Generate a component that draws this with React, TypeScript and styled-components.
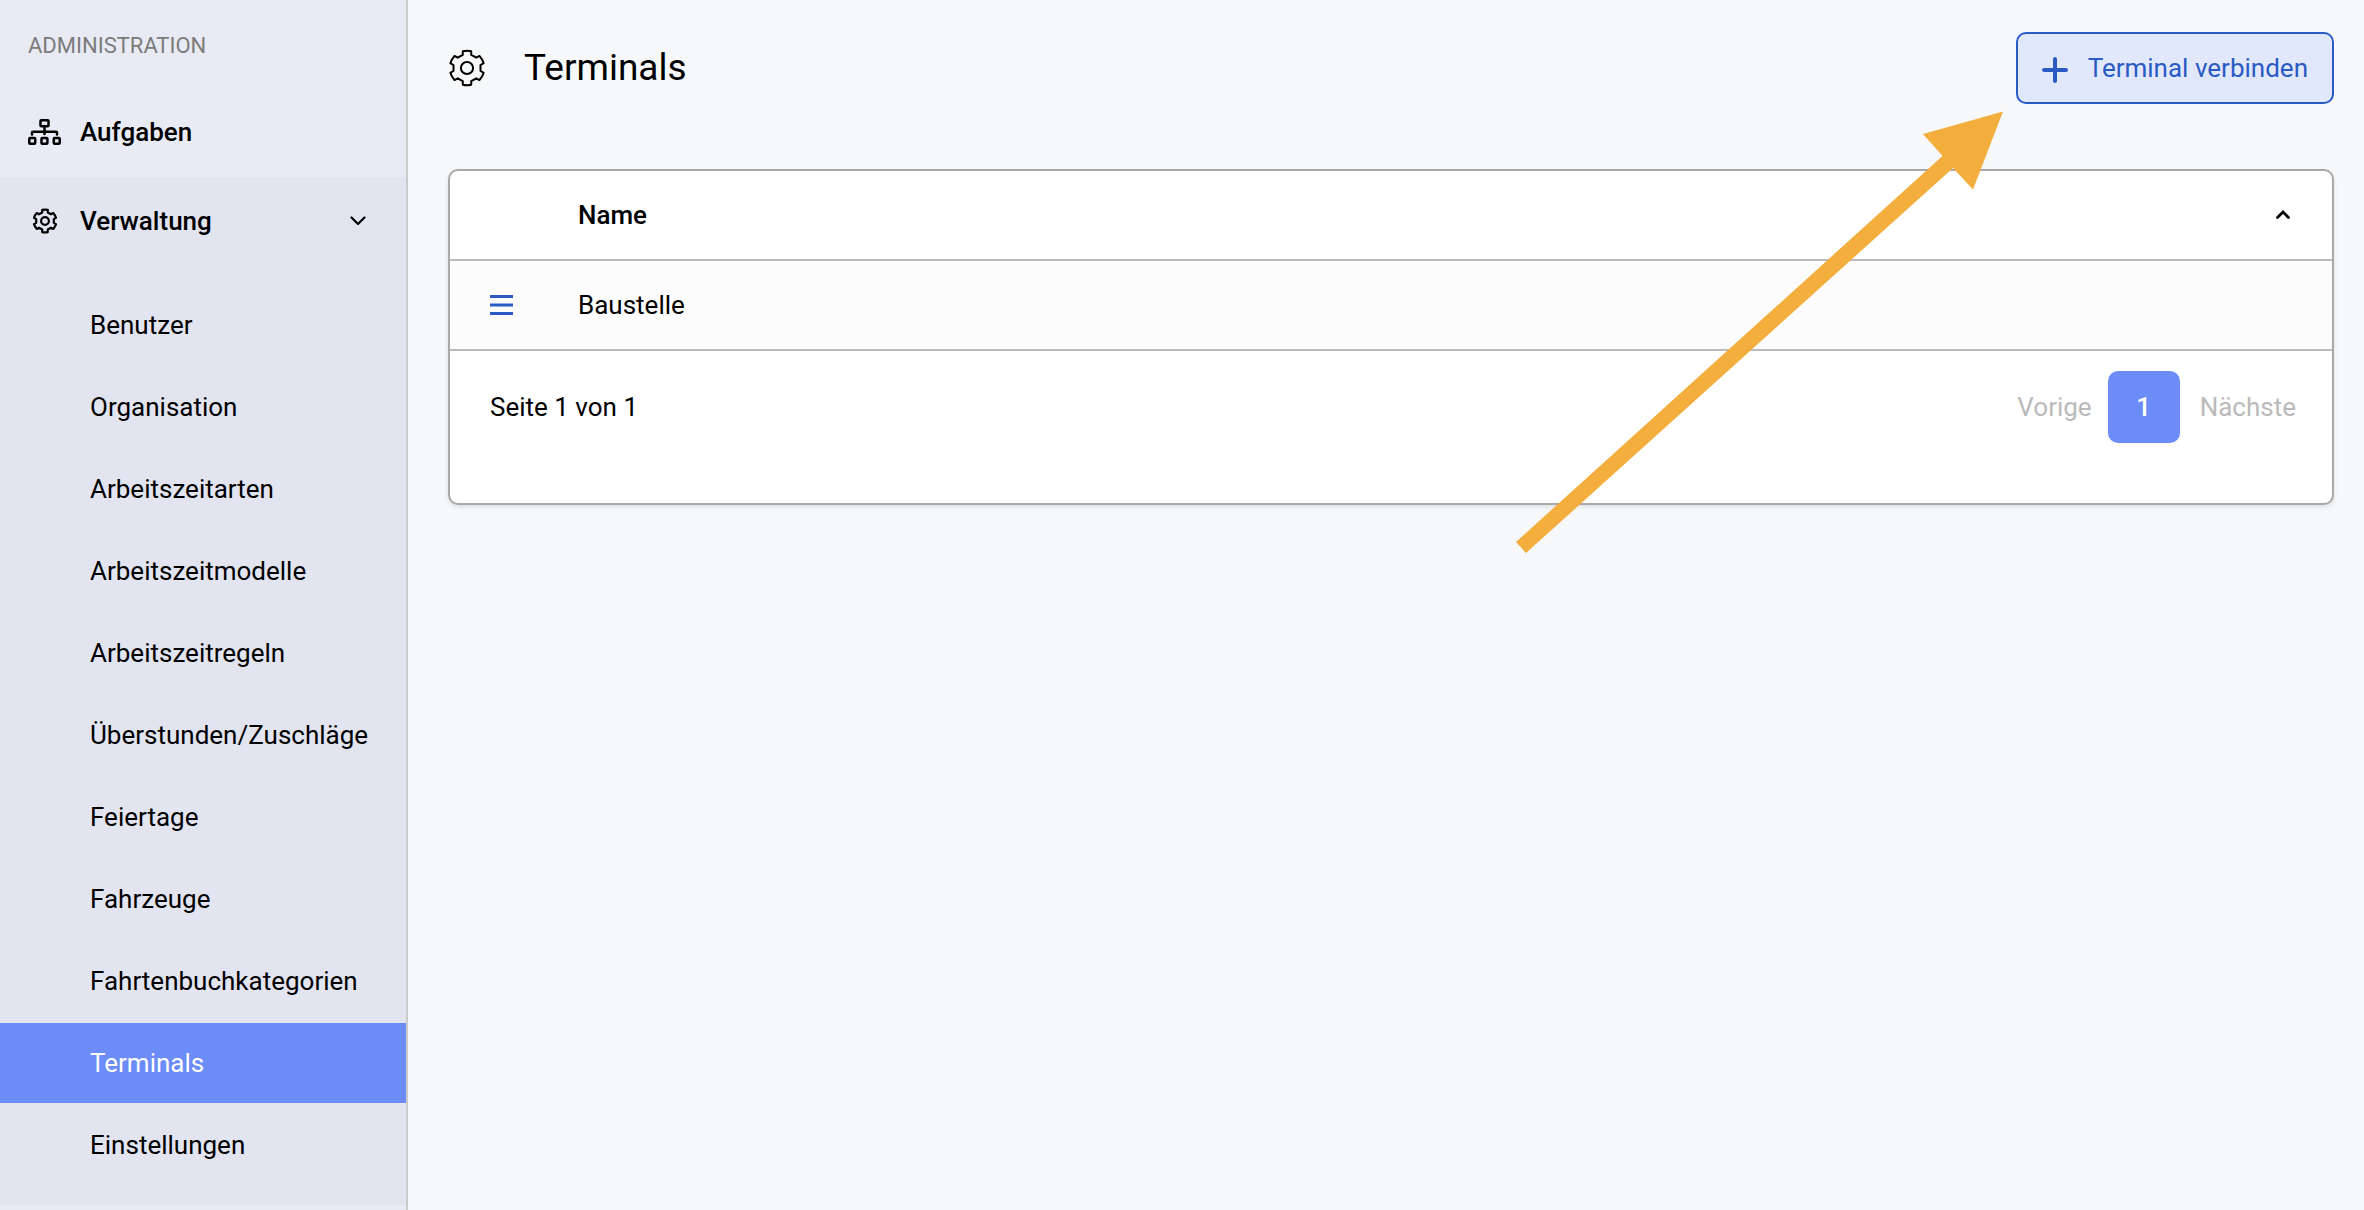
import React from "react";
import styled, { createGlobalStyle } from "styled-components";

const GlobalStyle = createGlobalStyle`
  *, *::before, *::after { box-sizing: border-box; }
  body {
    margin: 0;
    background: #f7f8fa;
    color: #000;
    font-family: Roboto, "Liberation Sans", sans-serif;
    font-size: 26px;
    line-height: 30px;
  }
  button { font: inherit; color: inherit; cursor: pointer; }
  a { color: inherit; text-decoration: none; }
  svg { display: block; flex: none; }
`;

const Layout = styled.div`
  position: relative;
  display: flex;
  min-height: 100vh;
`;

const Sidebar = styled.nav`
  flex: none;
  width: 408px;
  border-right: 2px solid #cbcbcb;
  background: #e8ebf4;
`;

const SectionLabel = styled.h2`
  margin: 0;
  padding: 31px 28px 26px;
  color: #7b7b7b;
  font-size: 22px;
  font-weight: 400;
`;

const TopLink = styled.a`
  display: flex;
  align-items: center;
  gap: 19px;
  height: 90px;
  padding: 0 28px;
  font-weight: 500;
`;

const Group = styled.section`
  padding-bottom: 20px;
  background: #e2e4f0;
`;

const GroupToggle = styled.button`
  display: flex;
  align-items: center;
  gap: 19px;
  width: 100%;
  height: 88px;
  padding: 0 40px 0 28px;
  border: 0;
  background: none;
  font-weight: 500;
  text-align: left;
`;

const GroupName = styled.span`
  flex: 1;
`;

const IconSlot = styled.span`
  display: flex;
  flex: none;
  justify-content: center;
  width: 33px;
`;

const SubList = styled.ul`
  display: flex;
  flex-direction: column;
  gap: 2px;
  margin: 0;
  padding: 20px 0 0;
  list-style: none;
`;

const SubLink = styled.a<{ $active?: boolean }>`
  display: flex;
  align-items: center;
  height: 80px;
  padding-left: 90px;
  background: ${(p) => (p.$active ? "#6c8cf8" : "transparent")};
  color: ${(p) => (p.$active ? "#fff" : "#000")};
`;

const Main = styled.main`
  flex: 1;
  min-width: 0;
  padding: 32px 30px 40px 40px;
`;

const PageHeader = styled.header`
  display: flex;
  align-items: center;
  gap: 38px;
  margin-bottom: 65px;
`;

const PageTitle = styled.h1`
  flex: 1;
  margin: 0;
  font-size: 37px;
  line-height: 44px;
  font-weight: 400;
`;

const ConnectButton = styled.button`
  display: flex;
  align-items: center;
  gap: 20px;
  height: 72px;
  padding: 0 24px;
  border: 2px solid #2a5bc4;
  border-radius: 10px;
  background: #e2e8fb;
  color: #2a5bc4;
`;

const Card = styled.section`
  border: 2px solid #a9a9a9;
  border-radius: 10px;
  background: #fff;
  box-shadow: 0 2px 4px rgba(0, 0, 0, 0.1);
  overflow: hidden;
`;

const Table = styled.table`
  width: 100%;
  border-collapse: separate;
  border-spacing: 0;
`;

const HeadCell = styled.th<{ $width?: number }>`
  width: ${(p) => (p.$width ? p.$width + "px" : "auto")};
  height: 90px;
  padding: 0;
  border-bottom: 2px solid #bbb;
  font-weight: 500;
  text-align: left;
`;

const Cell = styled.td`
  height: 90px;
  padding: 0;
  border-bottom: 2px solid #bbb;
  background: #fcfcfc;
`;

const IconButton = styled.button`
  display: flex;
  margin-left: 40px;
  padding: 0;
  border: 0;
  background: none;
  color: #2a5bc4;
`;

const Footer = styled.footer`
  display: flex;
  align-items: center;
  justify-content: space-between;
  padding: 20px 36px 60px 40px;
`;

const Pager = styled.div`
  display: flex;
  align-items: center;
`;

const PageStep = styled.button`
  padding: 0;
  border: 0;
  background: none;
  color: #bababa;
`;

const PageNumber = styled.button`
  width: 72px;
  height: 72px;
  margin: 0 20px 0 16px;
  padding: 0;
  border: 0;
  border-radius: 10px;
  background: #6c8cf8;
  color: #fff;
  font-weight: 500;
`;

const Pointer = styled.svg`
  position: absolute;
  top: 110px;
  right: 360px;
  pointer-events: none;
`;

// Outline of a six-toothed cog around the origin.
function cogPath(outer: number, inner: number) {
  const at = (radius: number, degrees: number) => {
    const a = (degrees * Math.PI) / 180;
    return `${(radius * Math.cos(a)).toFixed(2)} ${(radius * Math.sin(a)).toFixed(2)}`;
  };
  let d = "";
  for (let i = 0; i < 6; i++) {
    const c = i * 60 - 90;
    d += `${i ? "L" : "M"}${at(inner, c - 18)}L${at(outer, c - 14)}`;
    d += `A${outer} ${outer} 0 0 1 ${at(outer, c + 14)}L${at(inner, c + 18)}`;
  }
  return d + "Z";
}

type CogProps = { size: number; outer: number; inner: number; hole: number; stroke: number };

const CogIcon = ({ size, outer, inner, hole, stroke }: CogProps) => (
  <svg
    width={size}
    height={size}
    viewBox={`${-size / 2} ${-size / 2} ${size} ${size}`}
    fill="none"
    stroke="currentColor"
    strokeWidth={stroke}
    strokeLinejoin="round"
    aria-hidden="true"
  >
    <path d={cogPath(outer, inner)} />
    <circle r={hole} />
  </svg>
);

const SitemapIcon = () => (
  <svg width="33" height="26" viewBox="0 0 33 26" fill="none" stroke="currentColor" strokeWidth="2.5" strokeLinecap="round" strokeLinejoin="round" aria-hidden="true">
    <rect x="12.5" y="1.3" width="8" height="6" rx="0.8" />
    <path d="M16.5 7v8M4 15.5v-1.8a1 1 0 0 1 1-1h23a1 1 0 0 1 1 1v1.8" />
    <rect x="1.3" y="18.9" width="5.900" height="5.800" rx="0.8" />
    <rect x="13.500" y="18.9" width="5.900" height="5.800" rx="0.8" />
    <rect x="25.800" y="18.9" width="5.900" height="5.800" rx="0.8" />
  </svg>
);

const ENTRIES = [
  "Benutzer",
  "Organisation",
  "Arbeitszeitarten",
  "Arbeitszeitmodelle",
  "Arbeitszeitregeln",
  "Überstunden/Zuschläge",
  "Feiertage",
  "Fahrzeuge",
  "Fahrtenbuchkategorien",
  "Terminals",
  "Einstellungen",
];

export default function App() {
  return (
    <Layout>
      <GlobalStyle />
      <Sidebar>
        <SectionLabel>ADMINISTRATION</SectionLabel>
        <TopLink href="#aufgaben">
          <IconSlot><SitemapIcon /></IconSlot>
          Aufgaben
        </TopLink>
        <Group>
          <GroupToggle type="button" aria-expanded="true">
            <IconSlot><CogIcon size={26} outer={11.4} inner={9} hole={3.9} stroke={2.2} /></IconSlot>
            <GroupName>Verwaltung</GroupName>
            <svg width="16" height="10" viewBox="0 0 16 10" fill="none" stroke="currentColor" strokeWidth="2.2" strokeLinecap="round" strokeLinejoin="round" aria-hidden="true">
              <path d="M1.5 1.5 8 8l6.5-6.5" />
            </svg>
          </GroupToggle>
          <SubList>
            {ENTRIES.map((name) => (
              <li key={name}>
                <SubLink href={"#" + name} $active={name === "Terminals"}>{name}</SubLink>
              </li>
            ))}
          </SubList>
        </Group>
      </Sidebar>
      <Main>
        <PageHeader>
          <CogIcon size={38} outer={17.3} inner={13.8} hole={6.1} stroke={2} />
          <PageTitle>Terminals</PageTitle>
          <ConnectButton type="button">
            <svg width="26" height="30" viewBox="0 0 26 30" fill="none" stroke="currentColor" strokeWidth="4" strokeLinecap="round" aria-hidden="true">
              <path d="M13 6v22M2 17h22" />
            </svg>
            Terminal verbinden
          </ConnectButton>
        </PageHeader>
        <Card>
          <Table>
            <thead>
              <tr>
                <HeadCell $width={128} />
                <HeadCell>Name</HeadCell>
                <HeadCell $width={56}>
                  <svg width="14" height="10" viewBox="0 0 14 10" fill="none" stroke="currentColor" strokeWidth="2.8" strokeLinecap="round" aria-hidden="true">
                    <path d="M1.5 7.5 7 2l5.5 5.5" />
                  </svg>
                </HeadCell>
              </tr>
            </thead>
            <tbody>
              <tr>
                <Cell>
                  <IconButton type="button" aria-label="Menü">
                    <svg width="24" height="20" viewBox="0 0 24 20" fill="currentColor" aria-hidden="true">
                      <path d="M0 0h23v3H0zM0 8.5h23v3H0zM0 17h23v3H0z" />
                    </svg>
                  </IconButton>
                </Cell>
                <Cell>Baustelle</Cell>
                <Cell />
              </tr>
            </tbody>
          </Table>
          <Footer>
            <span>Seite 1 von 1</span>
            <Pager>
              <PageStep type="button" disabled>Vorige</PageStep>
              <PageNumber type="button" aria-current="page">1</PageNumber>
              <PageStep type="button" disabled>Nächste</PageStep>
            </Pager>
          </Footer>
        </Card>
      </Main>
      <Pointer width="488" height="444" viewBox="0 0 488 444" fill="#f4ae3d" aria-hidden="true">
        <path d="M0 432 426.500 46 407 24 487 1.500 457 79.500 437 58 10 443Z" />
      </Pointer>
    </Layout>
  );
}
